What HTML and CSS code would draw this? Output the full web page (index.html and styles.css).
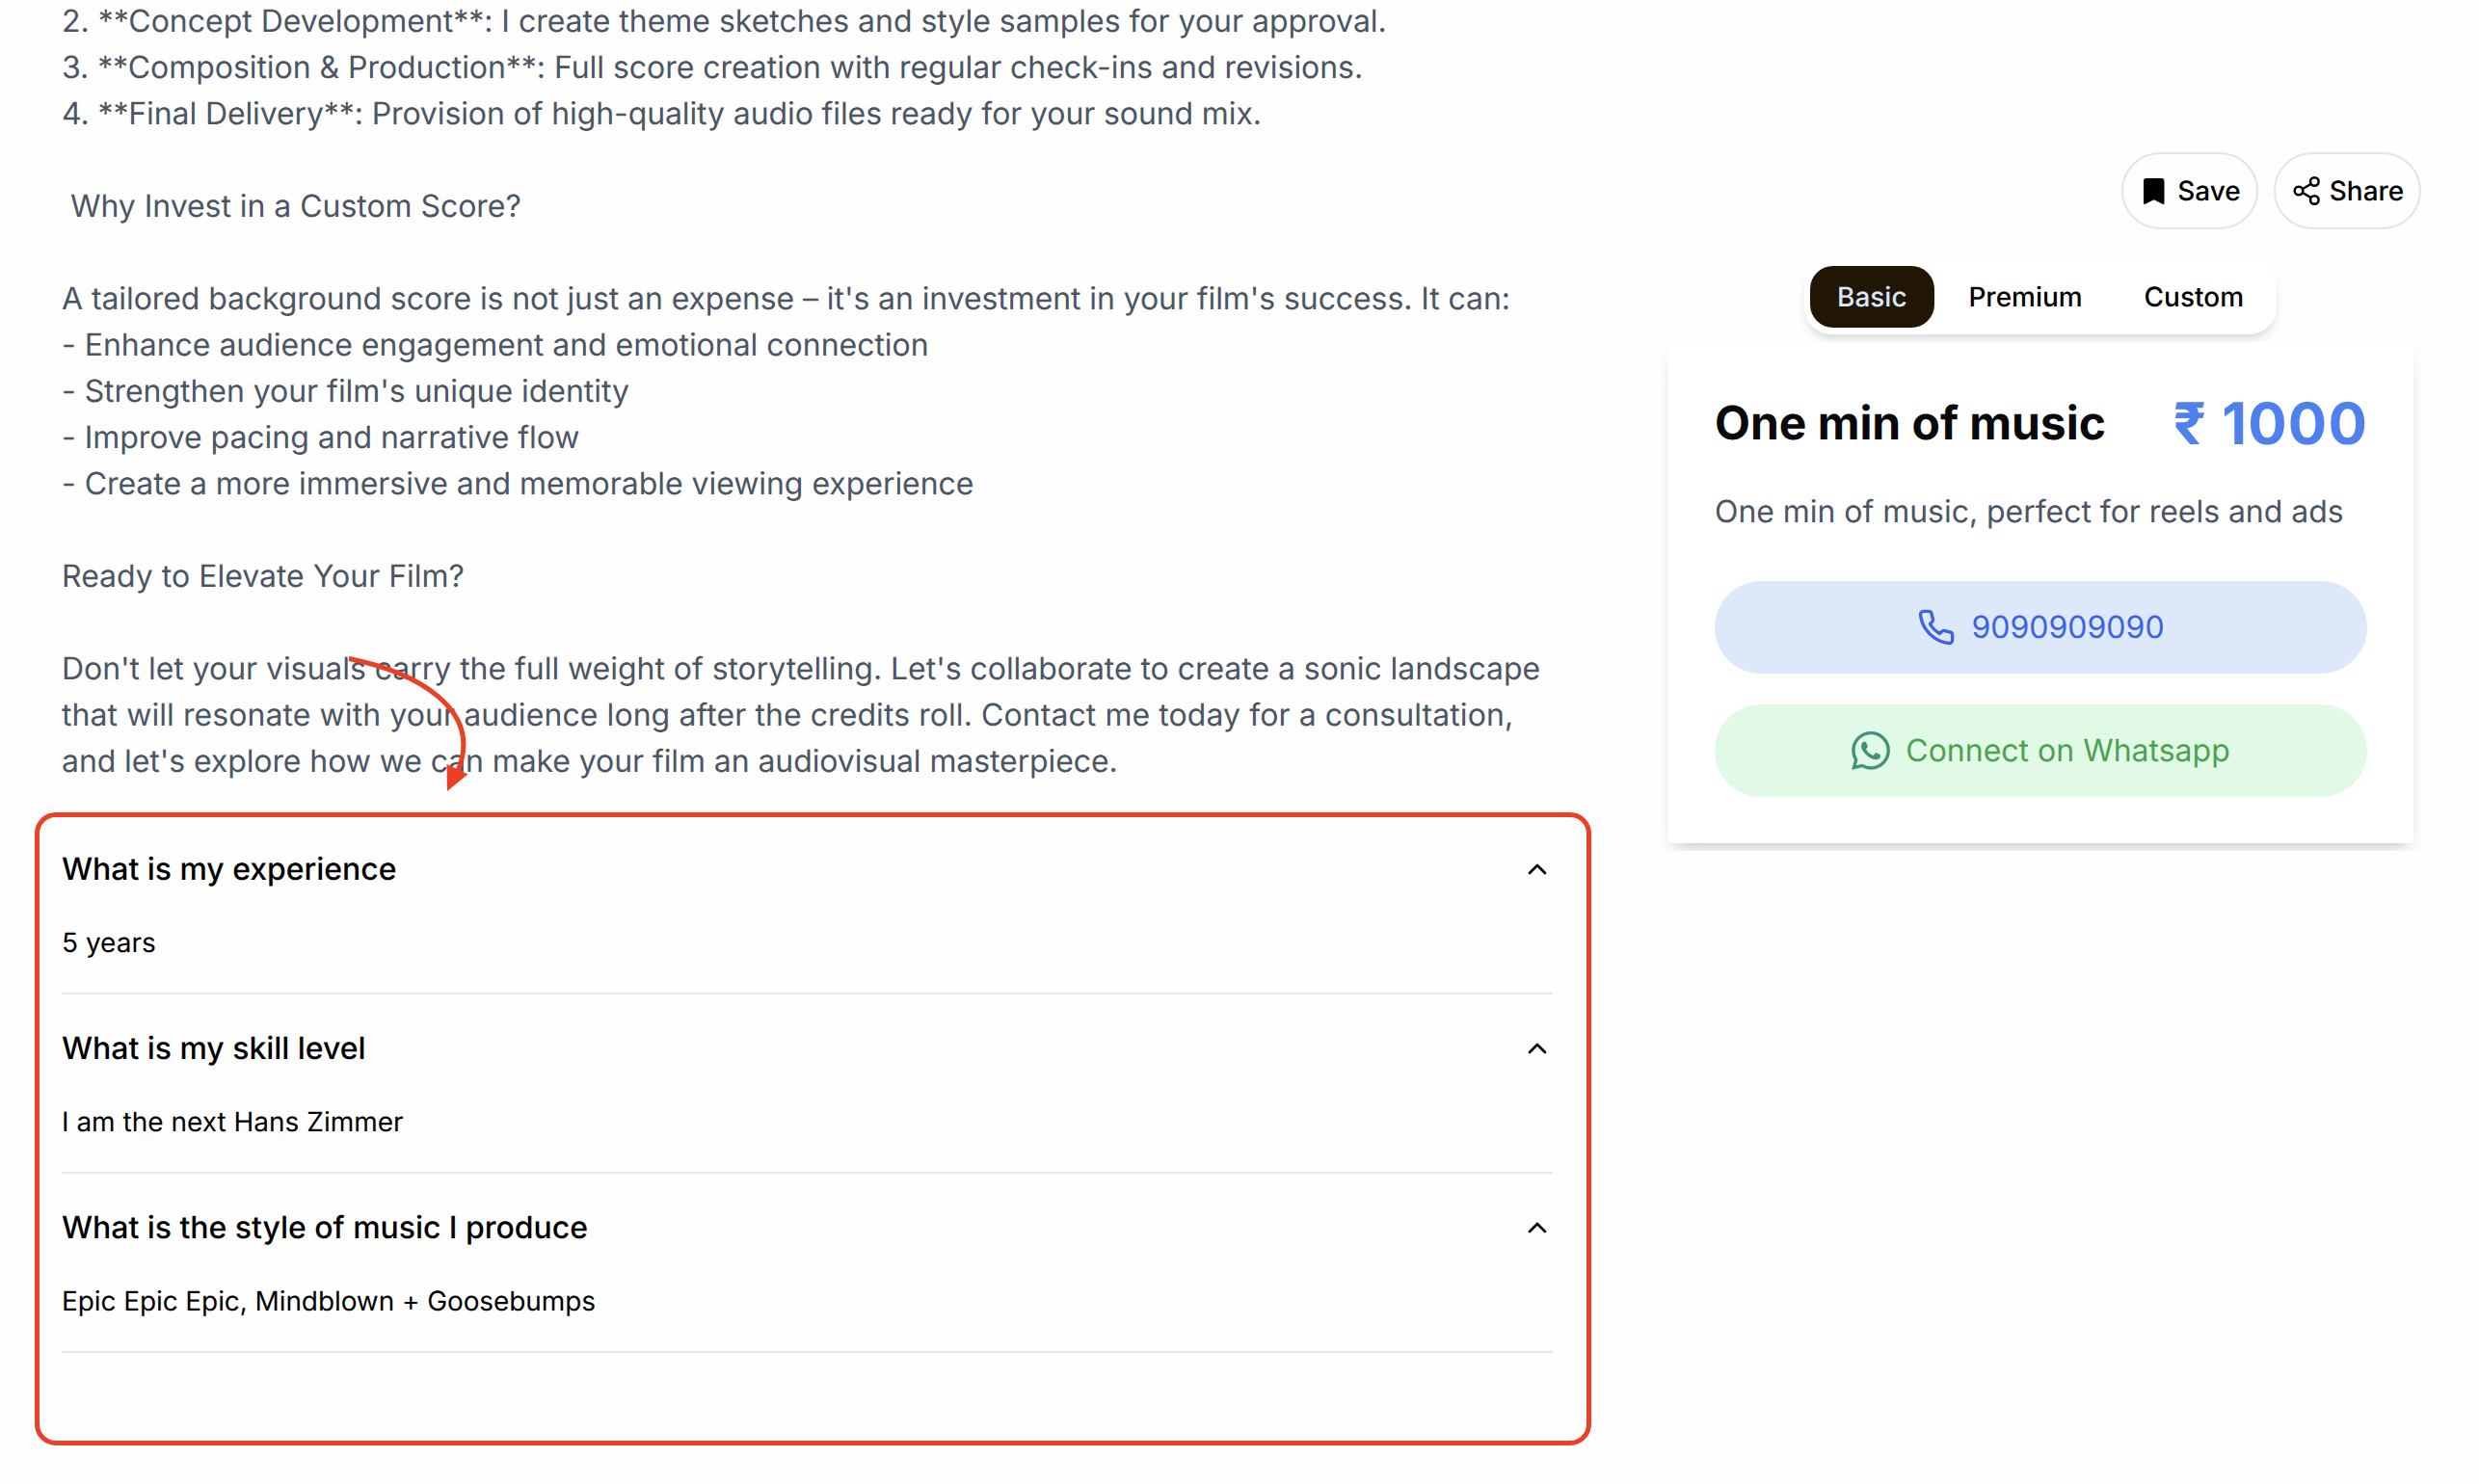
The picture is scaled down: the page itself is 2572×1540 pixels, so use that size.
FILE: index.html
```html
<!DOCTYPE html>
<html lang="en">
<head>
<meta charset="utf-8">
<title>Custom Film Score</title>
<link rel="stylesheet" href="styles.css">
</head>
<body>
<div class="page">
  <main class="main">
    <div class="description"><span class="snug">2. **Concept Development**: I create theme sketches and style samples for your approval.</span>
<span class="close">3. **Composition &amp; Production**: Full score creation with regular check-ins and revisions.</span>
<span class="tightest">4. **Final Delivery**: Provision of high-quality audio files ready for your sound mix.</span>

<span class="close"> Why Invest in a Custom Score?</span>

<span class="tight">A tailored background score is not just an expense – it's an investment in your film's success. It can:</span>
<span class="snug">- Enhance audience engagement and emotional connection</span>
<span class="close">- Strengthen your film's unique identity</span>
<span class="close">- Improve pacing and narrative flow</span>
<span class="close">- Create a more immersive and memorable viewing experience</span>

Ready to Elevate Your Film?

<span class="close">Don't let your visuals carry the full weight of storytelling. Let's collaborate to create a sonic landscape</span>
<span class="loose">that will resonate with your audience long after the credits roll. Contact me today for a consultation,</span>
<span class="tight">and let's explore how we can make your film an audiovisual masterpiece.</span></div>
    <svg class="arrow" viewBox="0 0 140 150" fill="none"><path d="M12 13.500C80 27 152 65 125 130" stroke="#eb4026" stroke-width="5"/><path d="M113.500 123L135.500 133.500L114 151Z" fill="#eb4026"/></svg>
    <section class="faq">
      <article class="faq-item">
        <h3 class="question">What is my experience<svg class="chevron" viewBox="0 0 24 24"><path d="m18 15-6-6-6 6"/></svg></h3>
        <p class="answer">5 years</p>
      </article>
      <article class="faq-item">
        <h3 class="question">What is my skill level<svg class="chevron" viewBox="0 0 24 24"><path d="m18 15-6-6-6 6"/></svg></h3>
        <p class="answer">I am the next Hans Zimmer</p>
      </article>
      <article class="faq-item">
        <h3 class="question">What is the style of music I produce<svg class="chevron" viewBox="0 0 24 24"><path d="m18 15-6-6-6 6"/></svg></h3>
        <p class="answer tight">Epic Epic Epic, Mindblown + Goosebumps</p>
      </article>
    </section>
  </main>
  <aside class="side">
    <div class="actions">
      <button class="action save"><svg class="action-icon" viewBox="0 0 32 32"><path d="M7.500 3H23.500Q26.500 3 26.500 6V28.500Q26.500 30.500 24.800 29.700L15.700 25.300L6.700 29.700Q5 30.500 5 28.500V6Q5 3 7.500 3Z" fill="#000"/></svg>Save</button>
      <button class="action share"><svg class="action-icon" viewBox="0 0 32 32" fill="none" stroke="#000" stroke-width="2.500"><circle cx="8" cy="16" r="4.300"/><circle cx="24.300" cy="6.500" r="4.300"/><circle cx="24.300" cy="25.500" r="4.300"/><path d="M12 14L20.500 9M12 18L20.500 23"/></svg>Share</button>
    </div>
    <div class="tabs">
      <button class="tab active">Basic</button>
      <button class="tab">Premium</button>
      <button class="tab">Custom</button>
    </div>
    <div class="card-clip">
      <div class="card">
        <div class="card-head"><h2 class="title">One min of music</h2><span class="price">₹ 1000</span></div>
        <p class="summary close">One min of music, perfect for reels and ads</p>
        <a class="contact phone"><svg class="contact-icon" viewBox="0 0 24 24" fill="none" stroke="currentColor" stroke-width="2" stroke-linecap="round" stroke-linejoin="round"><path d="M22 16.920v3a2 2 0 0 1-2.180 2 19.790 19.790 0 0 1-8.630-3.070 19.500 19.500 0 0 1-6-6 19.790 19.790 0 0 1-3.070-8.670A2 2 0 0 1 4.110 2h3a2 2 0 0 1 2 1.720 12.840 12.840 0 0 0 .7 2.810 2 2 0 0 1-.45 2.110L8.090 9.910a16 16 0 0 0 6 6l1.270-1.270a2 2 0 0 1 2.110-.45 12.840 12.840 0 0 0 2.810.7A2 2 0 0 1 22 16.920z"/></svg>9090909090</a>
        <a class="contact whatsapp"><svg class="contact-icon" viewBox="0 0 24 24" fill="#43907f"><path d="M17.472 14.382c-.297-.149-1.758-.867-2.030-.967-.273-.099-.471-.148-.67.150-.197.297-.767.966-.940 1.164-.173.199-.347.223-.644.075-.297-.150-1.255-.463-2.390-1.475-.883-.788-1.480-1.761-1.653-2.059-.173-.297-.018-.458.130-.606.134-.133.298-.347.446-.520.149-.174.198-.298.298-.497.099-.198.050-.371-.025-.520-.075-.149-.669-1.612-.916-2.207-.242-.579-.487-.500-.669-.510-.173-.008-.371-.010-.570-.010-.198 0-.520.074-.792.372-.272.297-1.040 1.016-1.040 2.479 0 1.462 1.065 2.875 1.213 3.074.149.198 2.096 3.200 5.077 4.487.709.306 1.262.489 1.694.625.712.227 1.360.195 1.871.118.571-.085 1.758-.719 2.006-1.413.248-.694.248-1.289.173-1.413-.074-.124-.272-.198-.570-.347m-5.421 7.403h-.004a9.870 9.870 0 01-5.031-1.378l-.361-.214-3.741.982.998-3.648-.235-.374a9.860 9.860 0 01-1.510-5.260c.001-5.450 4.436-9.884 9.888-9.884 2.640 0 5.122 1.030 6.988 2.898a9.825 9.825 0 012.893 6.994c-.003 5.450-4.437 9.884-9.885 9.884m8.413-18.297A11.815 11.815 0 0012.050 0C5.495 0 .160 5.335.157 11.892c0 2.096.547 4.142 1.588 5.945L.057 24l6.305-1.654a11.882 11.882 0 005.683 1.448h.005c6.554 0 11.890-5.335 11.893-11.893a11.821 11.821 0 00-3.480-8.413z"/></svg>Connect on Whatsapp</a>
      </div>
    </div>
  </aside>
</div>
</body>
</html>
```
FILE: styles.css
```css
* { box-sizing: border-box; }
body {
  margin: 0;
  background: #fefefe;
  color: #000;
  font-family: Inter, "Liberation Sans", sans-serif;
  font-size: 32px;
  line-height: 48px;
  text-rendering: geometricPrecision;
}
h2, h3, p { margin: 0; }
button { font: inherit; border: 0; background: none; padding: 0; color: inherit; text-rendering: inherit; }
svg { display: block; flex: none; }

.page {
  display: flex;
  justify-content: space-between;
  height: 1540px;
  overflow: hidden;
}
.main {
  position: relative;
  width: 1615px;
  margin: -2px 0 0 36px;
}
.description {
  width: 1547px;
  margin-left: 28px;
  color: #4b5563;
  white-space: pre;
}
.snug { letter-spacing: -.02px; }
.close { letter-spacing: -.045px; }
.tight { letter-spacing: -.09px; }
.tightest { letter-spacing: -.11px; }
.loose { letter-spacing: .073px; }
.arrow {
  position: absolute;
  left: 314px;
  top: 672px;
  width: 140px;
  height: 150px;
  overflow: visible;
}
.faq {
  height: 657px;
  margin-top: 29px;
  padding: 0 35px 0 23px;
  border: 5px solid #eb4026;
  border-radius: 22px;
}
.faq-item {
  height: 186px;
  padding: 30px 0 32px;
  border-bottom: 2px solid #e5e7eb;
}
.faq-item:first-child { height: 184px; }
.question {
  display: flex;
  justify-content: space-between;
  align-items: center;
  font-size: 32px;
  font-weight: 500;
  letter-spacing: -.04px;
}
.faq-item + .faq-item { padding-top: 32px; }
.chevron {
  width: 32px;
  height: 32px;
  fill: none;
  stroke: #000;
  stroke-width: 2;
  stroke-linecap: round;
  stroke-linejoin: round;
}
.answer {
  margin-top: 32px;
  font-size: 28px;
  line-height: 40px;
}

.side {
  display: flex;
  flex-direction: column;
  align-items: center;
  width: 789px;
  margin-right: 60px;
  padding-top: 158px;
}
.actions {
  display: flex;
  gap: 16px;
  align-self: flex-end;
}
.action {
  display: flex;
  align-items: center;
  justify-content: center;
  gap: 8px;
  height: 80px;
  border: 2px solid #e4e4e7;
  border-radius: 40px;
  font-size: 28px;
  font-weight: 500;
  line-height: 40px;
}
.save { width: 142px; }
.share { width: 153px; }
.action-icon { width: 32px; height: 32px; }
.tabs {
  display: flex;
  justify-content: space-between;
  width: 490px;
  height: 79px;
  margin: 30px 1px 0 0;
  padding: 8px 6px 7px;
  border-radius: 28px;
  background: #fff;
  box-shadow: 0 8px 12px -2px rgba(0, 0, 0, .1), 0 4px 8px -4px rgba(0, 0, 0, .1);
}
.tab {
  height: 64px;
  padding: 0 28px;
  border-radius: 24px;
  font-size: 28px;
  font-weight: 500;
  line-height: 40px;
}
.active { background: #211604; color: #dbe7fd; }
.card-clip {
  position: relative;
  width: 789px;
  margin-top: 8px;
  padding: 0 8px 8px;
  overflow: hidden;
}
.card {
  display: flex;
  flex-direction: column;
  height: 520px;
  padding: 48px;
  background: #fff;
  box-shadow: 0 14px 30px -6px rgba(0, 0, 0, .1), 0 8px 12px -8px rgba(0, 0, 0, .2);
}
.card-head {
  display: flex;
  align-items: center;
  justify-content: space-between;
  height: 72px;
}
.title {
  font-size: 48px;
  font-weight: 700;
  letter-spacing: -.05px;
  color: #09090b;
}
.price {
  margin-right: -1px;
  padding-top: 1px;
  font-size: 60px;
  font-weight: 700;
  letter-spacing: 1.1px;
  color: #4e80ee;
}
.summary {
  margin: 32px 0 48px;
  color: #4b5563;
}
.contact {
  display: flex;
  align-items: center;
  justify-content: center;
  gap: 16px;
  height: 96px;
  border-radius: 48px;
}
.contact + .contact { margin-top: 32px; }
.contact-icon { width: 40px; height: 40px; }
.phone { background: #dde8fb; color: #3b63e5; }
.whatsapp { background: #e0fae5; color: #4ba252; }
```
